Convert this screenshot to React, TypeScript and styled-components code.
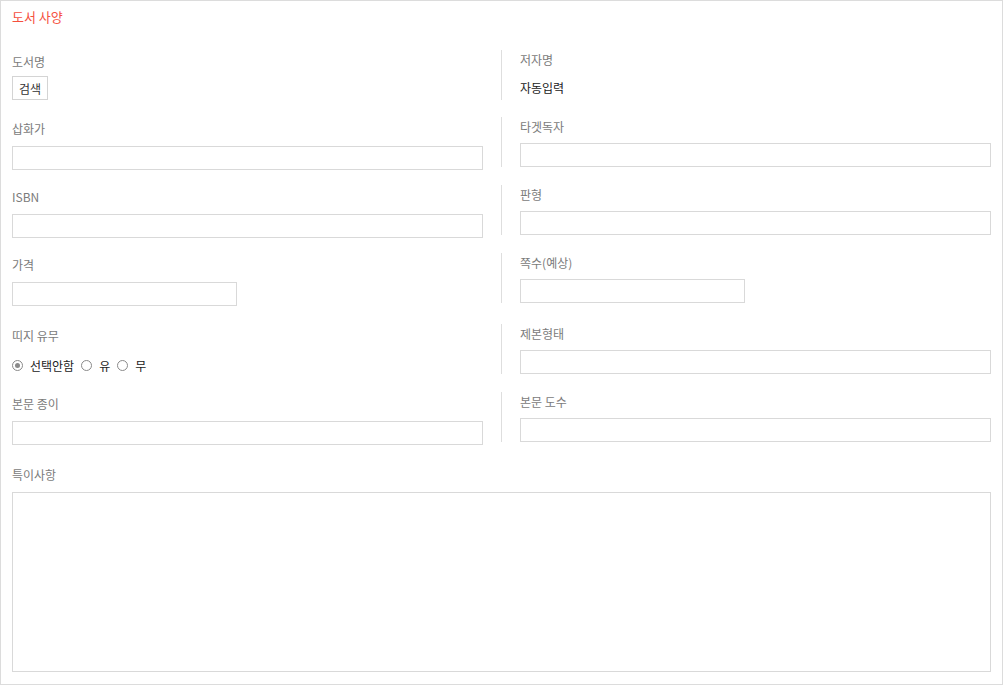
import styled, { createGlobalStyle } from "styled-components";

const GlobalStyle = createGlobalStyle`
  * {
    box-sizing: border-box;
  }
  body {
    margin: 0;
    background: #fff;
    font-family: "Noto Sans CJK KR", "Noto Sans", "Liberation Sans", sans-serif;
    font-size: 12px;
  }
`;

type FieldDef = {
  label: string;
  half?: boolean;
};

type RowDef = {
  left: FieldDef | "button" | "radio";
  right: FieldDef | "auto";
  spaced?: boolean;
};

const rows: RowDef[] = [
  { left: "button", right: "auto" },
  { left: { label: "삽화가" }, right: { label: "타겟독자" } },
  { left: { label: "ISBN" }, right: { label: "판형" } },
  { left: { label: "가격", half: true }, right: { label: "쪽수(예상)", half: true }, spaced: true },
  { left: "radio", right: { label: "제본형태" } },
  { left: { label: "본문 종이" }, right: { label: "본문 도수" } },
];

const bindOptions = ["선택안함", "유", "무"];

function App() {
  return (
    <>
      <GlobalStyle />
      <Panel>
        <Title>도서 사양</Title>
        <Rows>
          {rows.map((row, idx) => (
            <Row key={idx} $spaced={row.spaced}>
              <LeftCell>
                {row.left === "button" ? (
                  <>
                    <Label>도서명</Label>
                    <SearchButton type="button">검색</SearchButton>
                  </>
                ) : row.left === "radio" ? (
                  <>
                    <Label>띠지 유무</Label>
                    <RadioLine>
                      {bindOptions.map((opt, i) => (
                        <RadioLabel key={opt}>
                          <Radio type="radio" name="band" defaultChecked={i === 0} />
                          {opt}
                        </RadioLabel>
                      ))}
                    </RadioLine>
                  </>
                ) : (
                  <>
                    <Label>{row.left.label}</Label>
                    <TextInput $half={row.left.half} />
                  </>
                )}
              </LeftCell>
              <RightCell>
                {row.right === "auto" ? (
                  <>
                    <Label>저자명</Label>
                    <AutoText>자동입력</AutoText>
                  </>
                ) : (
                  <>
                    <Label>{row.right.label}</Label>
                    <TextInput $half={row.right.half} />
                  </>
                )}
              </RightCell>
            </Row>
          ))}
        </Rows>
        <MemoBlock>
          <Label>특이사항</Label>
          <Memo />
        </MemoBlock>
      </Panel>
    </>
  );
}

export default App;

const Panel = styled.div`
  width: 1003px;
  height: 685px;
  border: 1px solid #dcdcdc;
  padding: 0 11px 12px;
  display: flex;
  flex-direction: column;
`;

const Title = styled.div`
  height: 34px;
  padding-top: 7px;
  line-height: 18px;
  font-size: 13px;
  color: #f5503e;
`;

const Rows = styled.div`
  margin-top: 15px;
`;

const Row = styled.div<{ $spaced?: boolean }>`
  display: flex;
  align-items: flex-start;
  min-height: 52px;
  margin-bottom: ${(p) => (p.$spaced ? "18px" : "15px")};
`;

const LeftCell = styled.div`
  width: 471px;
  padding-top: 2px;
  margin-right: 18px;
`;

const RightCell = styled.div`
  flex: 1;
  border-left: 1px solid #dedede;
  padding-left: 18px;
`;

const Label = styled.div`
  height: 20px;
  line-height: 20px;
  color: #7b7b7b;
  margin-bottom: 6px;
  ${LeftCell} & {
    margin-bottom: 7px;
  }
`;

const TextInput = styled.input<{ $half?: boolean }>`
  display: block;
  width: ${(p) => (p.$half ? "225px" : "100%")};
  height: 24px;
  border: 1px solid #d9d9d9;
  outline: none;
  padding: 0 6px;
  font-family: inherit;
  font-size: 12px;
  background: #fff;
`;

const SearchButton = styled.button`
  display: block;
  width: 36px;
  height: 24px;
  margin-top: -3px;
  padding: 0;
  border: 1px solid #d4d4d4;
  background: #fff;
  color: #333;
  font-family: inherit;
  font-size: 12px;
  cursor: pointer;
`;

const AutoText = styled.div`
  height: 24px;
  line-height: 24px;
  color: #222;
`;

const RadioLine = styled.div`
  display: flex;
  align-items: center;
  height: 24px;
  color: #222;
`;

const RadioLabel = styled.label`
  display: flex;
  align-items: center;
  margin-right: 7px;
`;

const Radio = styled.input`
  appearance: none;
  width: 11px;
  height: 11px;
  margin: 0 7px 0 0;
  border: 1px solid #8a8a8a;
  border-radius: 50%;
  background: #fff;
  position: relative;

  &:checked::after {
    content: "";
    position: absolute;
    left: 2px;
    top: 2px;
    width: 5px;
    height: 5px;
    border-radius: 50%;
    background: #8a8a8a;
  }
`;

const MemoBlock = styled.div`
  margin-top: 5px;
  flex: 1;
  display: flex;
  flex-direction: column;

  & > ${Label} {
    margin-bottom: 7px;
  }
`;

const Memo = styled.textarea`
  flex: 1;
  width: 100%;
  border: 1px solid #d9d9d9;
  outline: none;
  resize: none;
  font-family: inherit;
  font-size: 12px;
`;
